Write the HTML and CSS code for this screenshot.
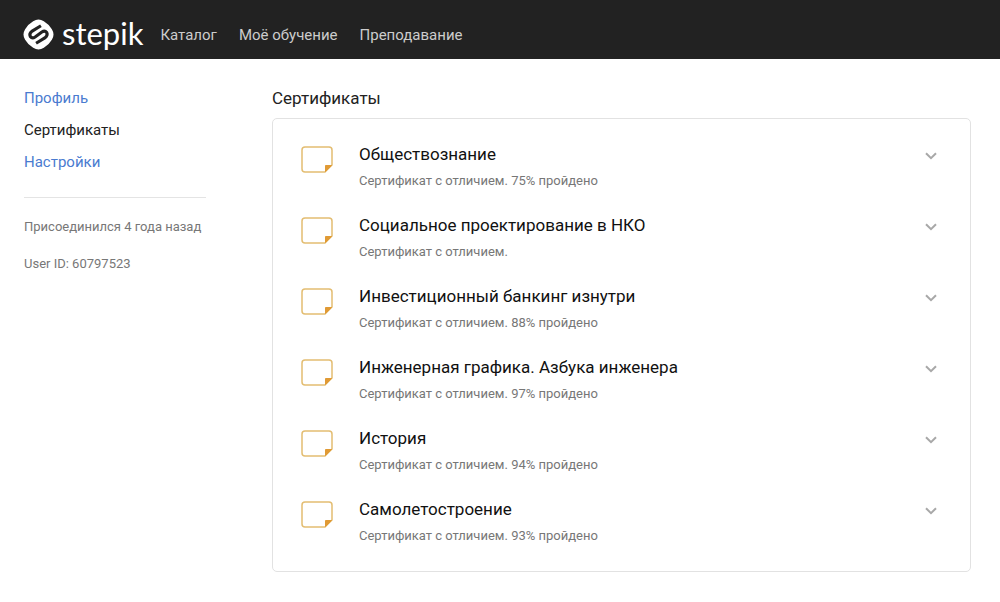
FILE: index.html
```html
<!DOCTYPE html>
<html lang="ru">
<head>
<meta charset="utf-8">
<title>Сертификаты — Stepik</title>
<link rel="stylesheet" href="styles.css">
</head>
<body>
<svg class="sprite" aria-hidden="true">
  <symbol id="certificate" viewBox="0 0 32 27">
    <path d="M4 1H28Q31 1 31 4V19L24 26H4Q1 26 1 23V4Q1 1 4 1Z" fill="#fff" stroke="#e3bd72" stroke-width="1.5"/>
    <path d="M24.500 25.500V19.500H30.500Z" fill="#e09a35" stroke="#e09a35" stroke-width="1"/>
  </symbol>
  <symbol id="chevron" viewBox="0 0 12 8">
    <path d="M1 1.200L6 6.200L11 1.200" fill="none" stroke="#a8a8a8" stroke-width="2"/>
  </symbol>
</svg>
<header class="header">
  <a class="logo" href="#" aria-label="stepik">
    <svg class="logo-mark" viewBox="0 0 32 32" aria-hidden="true">
      <path d="M10.500 2.200Q16 -1.200 21.500 2.200Q27 5.500 29.800 10.500Q33.200 16 29.800 21.500Q26.500 27 21.500 29.800Q16 33.200 10.500 29.800Q5 26.500 2.200 21.500Q-1.200 16 2.200 10.500Q5.500 5 10.500 2.200Z" fill="#fff"/>
      <path d="M18.500 7L9.500 12.500Q6 15 7.500 18Q9.500 20.500 12.500 18.500L19.500 13.500Q22.500 11.500 24.500 14Q26 17 22.500 19.500L13.500 25" fill="none" stroke="#222" stroke-width="3.200"/>
    </svg>
    <span class="logo-text">stepik</span>
  </a>
  <nav class="nav">
    <a href="#">Каталог</a>
    <a href="#">Моё обучение</a>
    <a href="#">Преподавание</a>
  </nav>
</header>
<div class="page">
  <aside class="sidebar">
    <nav class="menu">
      <a href="#">Профиль</a>
      <a class="current" href="#" aria-current="page">Сертификаты</a>
      <a href="#">Настройки</a>
    </nav>
    <p class="meta">Присоединился 4 года назад</p>
    <p class="meta">User ID: 60797523</p>
  </aside>
  <main class="content">
    <h1 class="title">Сертификаты</h1>
    <ul class="card">
      <li class="item">
        <svg class="cert-icon" aria-hidden="true"><use href="#certificate"/></svg>
        <div class="text"><h2 class="course">Обществознание</h2><p class="result">Сертификат с отличием. 75% пройдено</p></div>
        <button class="toggle" type="button" aria-label="Подробнее"><svg class="chevron"><use href="#chevron"/></svg></button>
      </li>
      <li class="item">
        <svg class="cert-icon" aria-hidden="true"><use href="#certificate"/></svg>
        <div class="text"><h2 class="course">Социальное проектирование в НКО</h2><p class="result">Сертификат с отличием.</p></div>
        <button class="toggle" type="button" aria-label="Подробнее"><svg class="chevron"><use href="#chevron"/></svg></button>
      </li>
      <li class="item">
        <svg class="cert-icon" aria-hidden="true"><use href="#certificate"/></svg>
        <div class="text"><h2 class="course">Инвестиционный банкинг изнутри</h2><p class="result">Сертификат с отличием. 88% пройдено</p></div>
        <button class="toggle" type="button" aria-label="Подробнее"><svg class="chevron"><use href="#chevron"/></svg></button>
      </li>
      <li class="item">
        <svg class="cert-icon" aria-hidden="true"><use href="#certificate"/></svg>
        <div class="text"><h2 class="course">Инженерная графика. Азбука инженера</h2><p class="result">Сертификат с отличием. 97% пройдено</p></div>
        <button class="toggle" type="button" aria-label="Подробнее"><svg class="chevron"><use href="#chevron"/></svg></button>
      </li>
      <li class="item">
        <svg class="cert-icon" aria-hidden="true"><use href="#certificate"/></svg>
        <div class="text"><h2 class="course">История</h2><p class="result">Сертификат с отличием. 94% пройдено</p></div>
        <button class="toggle" type="button" aria-label="Подробнее"><svg class="chevron"><use href="#chevron"/></svg></button>
      </li>
      <li class="item">
        <svg class="cert-icon" aria-hidden="true"><use href="#certificate"/></svg>
        <div class="text"><h2 class="course">Самолетостроение</h2><p class="result">Сертификат с отличием. 93% пройдено</p></div>
        <button class="toggle" type="button" aria-label="Подробнее"><svg class="chevron"><use href="#chevron"/></svg></button>
      </li>
    </ul>
  </main>
</div>
</body>
</html>
```
FILE: styles.css
```css
* { box-sizing: border-box; }
body { margin: 0; background: #fff; color: #222; font-family: Roboto, "Noto Sans", sans-serif; font-size: 15px; }
a { text-decoration: none; }
h1, h2, p, ul { margin: 0; padding: 0; font-weight: 400; }
.sprite { display: none; }

.header { display: flex; align-items: center; gap: 17px; padding: 10px 23px 0; height: 59px; background: #222; }
.logo { display: flex; align-items: center; gap: 8px; color: #fff; }
.logo-mark { width: 31px; height: 31px; }
.logo-text { font: 31px/40px Lato, sans-serif; padding-bottom: 4px; }
.nav { display: flex; gap: 22px; }
.nav a { color: #ccc; line-height: 20px; }

.page { display: flex; gap: 66px; padding: 28px 29px 30px 24px; }
.sidebar { flex: 0 0 182px; }
.menu { display: flex; flex-direction: column; gap: 12px; padding: 1px 0 25px; margin-bottom: 19px; border-bottom: 1px solid #e4e4e4; }
.menu a { color: #4a7bd0; line-height: 20px; }
.menu .current { color: #222; }
.meta { margin-bottom: 18px; color: #777; font-size: 13px; line-height: 19px; white-space: nowrap; }

.content { flex: 1; min-width: 0; }
.title { font-size: 17px; line-height: 22px; }
.card { margin-top: 9px; padding: 24px 33px 25px 28px; border: 1px solid #e2e2e2; border-radius: 5px; list-style: none; }
.item { display: flex; align-items: flex-start; padding-bottom: 23px; }
.item:last-child { padding-bottom: 0; }
.cert-icon { flex: none; width: 32px; height: 27px; margin: 3px 26px 0 0; }
.text { flex: 1; }
.course { color: #111; font-size: 17px; line-height: 23px; }
.result { margin-top: 5px; color: #777; font-size: 13px; line-height: 20px; }
.toggle { display: flex; margin-top: 9px; padding: 0; border: 0; background: none; cursor: pointer; }
.chevron { width: 12px; height: 8px; }
```
